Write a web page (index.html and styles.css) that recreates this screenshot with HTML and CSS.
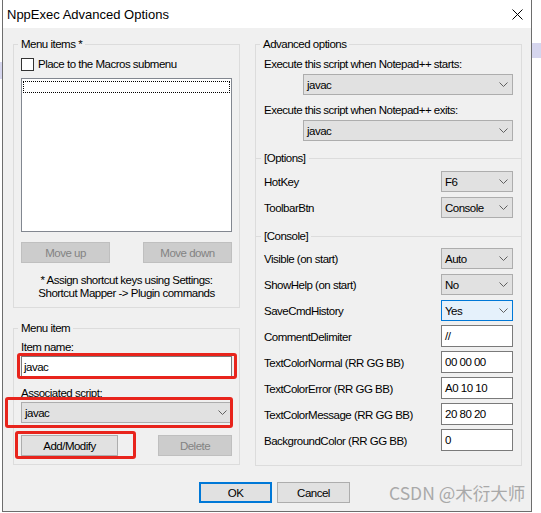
FILE: index.html
```html
<!DOCTYPE html>
<html>
<head>
<meta charset="utf-8">
<title>NppExec Advanced Options</title>
<link rel="stylesheet" href="styles.css">
</head>
<body>
<div class="window">
  <div class="titlebar">
    <span class="title">NppExec Advanced Options</span>
    <svg class="close" width="11" height="11" viewBox="0 0 11 11"><path d="M0.5 0.5 L10.5 10.5 M10.5 0.5 L0.5 10.5" stroke="#000" stroke-width="1" fill="none"/></svg>
  </div>
  <div class="client">
    <div class="columns">
      <div class="leftcol">
        <div class="group g-items">
          <span class="legend">Menu items *</span>
          <div class="check"><span class="box"></span><span>Place to the Macros submenu</span></div>
          <div class="listbox"><div class="focusrow"></div></div>
          <div class="btnrow">
            <div class="btn disabled w-move">Move up</div>
            <div class="btn disabled w-move">Move down</div>
          </div>
          <p class="note">* Assign shortcut keys using Settings:<br>Shortcut Mapper -&gt; Plugin commands</p>
        </div>
        <div class="group g-item">
          <span class="legend">Menu item</span>
          <div class="label">Item name:</div>
          <div class="edit edit-name">javac</div>
          <div class="label label-gap">Associated script:</div>
          <div class="combo combo-assoc"><span>javac</span><svg width="9" height="5" viewBox="0 0 9 5"><polyline points="0.5,0.5 4.5,4.5 8.5,0.5" fill="none" stroke="#606060" stroke-width="1"/></svg></div>
          <div class="btnrow btnrow-item">
            <div class="btn w-add">Add/Modify</div>
            <div class="btn disabled w-del">Delete</div>
          </div>
        </div>
      </div>
      <div class="group g-adv">
        <span class="legend">Advanced options</span>
        <div class="label">Execute this script when Notepad++ starts:</div>
        <div class="combo combo-wide"><span>javac</span><svg width="9" height="5" viewBox="0 0 9 5"><polyline points="0.5,0.5 4.5,4.5 8.5,0.5" fill="none" stroke="#606060" stroke-width="1"/></svg></div>
        <div class="label label-second">Execute this script when Notepad++ exits:</div>
        <div class="combo combo-wide"><span>javac</span><svg width="9" height="5" viewBox="0 0 9 5"><polyline points="0.5,0.5 4.5,4.5 8.5,0.5" fill="none" stroke="#606060" stroke-width="1"/></svg></div>

        <div class="section sec-options"><span>[Options]</span></div>
        <div class="opts opts-options">
          <span>HotKey</span>
          <div class="combo"><span>F6</span><svg width="9" height="5" viewBox="0 0 9 5"><polyline points="0.5,0.5 4.5,4.5 8.5,0.5" fill="none" stroke="#606060" stroke-width="1"/></svg></div>
          <span>ToolbarBtn</span>
          <div class="combo"><span>Console</span><svg width="9" height="5" viewBox="0 0 9 5"><polyline points="0.5,0.5 4.5,4.5 8.5,0.5" fill="none" stroke="#606060" stroke-width="1"/></svg></div>
        </div>

        <div class="section sec-console"><span>[Console]</span></div>
        <div class="opts opts-console">
          <span>Visible (on start)</span>
          <div class="combo"><span>Auto</span><svg width="9" height="5" viewBox="0 0 9 5"><polyline points="0.5,0.5 4.5,4.5 8.5,0.5" fill="none" stroke="#606060" stroke-width="1"/></svg></div>
          <span>ShowHelp (on start)</span>
          <div class="combo"><span>No</span><svg width="9" height="5" viewBox="0 0 9 5"><polyline points="0.5,0.5 4.5,4.5 8.5,0.5" fill="none" stroke="#606060" stroke-width="1"/></svg></div>
          <span>SaveCmdHistory</span>
          <div class="combo focused"><span>Yes</span><svg width="9" height="5" viewBox="0 0 9 5"><polyline points="0.5,0.5 4.5,4.5 8.5,0.5" fill="none" stroke="#606060" stroke-width="1"/></svg></div>
          <span>CommentDelimiter</span>
          <div class="edit edit-small">//</div>
          <span>TextColorNormal (RR GG BB)</span>
          <div class="edit edit-small">00 00 00</div>
          <span>TextColorError (RR GG BB)</span>
          <div class="edit edit-small">A0 10 10</div>
          <span>TextColorMessage (RR GG BB)</span>
          <div class="edit edit-small">20 80 20</div>
          <span>BackgroundColor (RR GG BB)</span>
          <div class="edit edit-small">0</div>
        </div>
      </div>
    </div>
    <div class="footer">
      <div class="btn btn-ok">OK</div>
      <div class="btn btn-cancel">Cancel</div>
    </div>
  </div>
</div>
<div class="mark mark-name"></div>
<div class="mark mark-assoc"></div>
<div class="mark mark-add"></div>
<span class="watermark">CSDN @木衍大师</span>
</body>
</html>
```
FILE: styles.css
```css
html, body {
  margin: 0;
  padding: 0;
}
body {
  width: 541px;
  height: 513px;
  position: relative;
  overflow: hidden;
  font-family: "Liberation Sans", Arial, sans-serif;
  font-size: 11.5px;
  letter-spacing: -0.5px;
  color: #000;
  background:
    linear-gradient(#d6d6ee, #d6d6ee) right 0 top 43px / 10px 15px no-repeat,
    linear-gradient(#d6d6ee, #d6d6ee) left 0 top 62px / 2px 17px no-repeat,
    #ffffff;
}
.window {
  margin-left: 2px;
  width: 530px;
  height: 512px;
  box-sizing: border-box;
  border: 1px solid #6d6d6d;
  border-top: none;
  background: #f0f0f0;
  display: flex;
  flex-direction: column;
}
.titlebar {
  height: 28px;
  flex: 0 0 28px;
  background: #ffffff;
  display: flex;
  align-items: center;
  padding-left: 4px;
  padding-right: 8px;
}
.title {
  font-size: 13px;
  letter-spacing: 0;
  line-height: 16px;
  margin-top: 1px;
}
.close {
  margin-left: auto;
}
.client {
  flex: 1;
  padding: 16px 9px 0 10px;
}
.columns {
  display: flex;
  gap: 15px;
  align-items: flex-start;
}
.leftcol {
  width: 227px;
  display: flex;
  flex-direction: column;
}
.group {
  position: relative;
  border: 1px solid #dcdcdc;
  box-sizing: border-box;
}
.legend {
  position: absolute;
  top: -8px;
  left: 4px;
  padding: 0 3px;
  background: #f0f0f0;
  line-height: 14px;
}
.g-items {
  height: 264px;
  padding: 13px 7px 0 7px;
}
.check {
  display: flex;
  align-items: center;
  gap: 4px;
  height: 13px;
  line-height: 13px;
}
.box {
  width: 13px;
  height: 13px;
  box-sizing: border-box;
  border: 1px solid #333333;
  background: #ffffff;
}
.listbox {
  margin-top: 7px;
  height: 154px;
  box-sizing: border-box;
  border: 1px solid #828790;
  background: #ffffff;
}
.focusrow {
  margin: 2px 1px 0 1px;
  height: 12px;
  box-sizing: border-box;
  border: 1px dotted #000000;
}
.btnrow {
  display: flex;
  justify-content: space-between;
  margin-top: 10px;
}
.btn {
  height: 21px;
  box-sizing: border-box;
  border: 1px solid #adadad;
  background: #e1e1e1;
  display: flex;
  align-items: center;
  justify-content: center;
  line-height: 14px;
}
.btn.disabled {
  background: #cccccc;
  border-color: #bfbfbf;
  color: #838383;
}
.w-move { width: 89px; }
.w-add { width: 97px; }
.w-del { width: 74px; }
.note {
  margin: 11px 0 0 0;
  line-height: 13px;
  text-align: center;
}
.g-item {
  margin-top: 20px;
  height: 137px;
  padding: 11px 7px 0 7px;
}
.label {
  height: 14px;
  line-height: 14px;
  white-space: nowrap;
}
.label-gap { margin-top: 9px; }
.edit {
  box-sizing: border-box;
  border: 1px solid #7a7a7a;
  background: #ffffff;
  padding-left: 2px;
  display: flex;
  align-items: center;
}
.edit-name {
  margin-top: 2px;
  height: 21px;
}
.combo {
  height: 21px;
  box-sizing: border-box;
  border: 1px solid #adadad;
  background: #e1e1e1;
  display: flex;
  align-items: center;
  justify-content: space-between;
  padding: 0 4px 0 3px;
}
.combo.focused {
  border-color: #0078d7;
  background: #e5f1fb;
}
.combo-assoc { margin-top: 2px; }
.btnrow-item { margin-top: 12px; }
.g-adv {
  width: 267px;
  height: 422px;
  padding: 12px 8px 0 8px;
}
.combo-wide {
  margin: 3px 0 0 39px;
}
.label-second { margin-top: 8px; }
.section {
  display: flex;
  align-items: center;
  height: 14px;
  line-height: 14px;
  margin: 0 -9px;
}
.section::before {
  content: "";
  width: 6px;
  height: 1px;
  background: #dcdcdc;
}
.section::after {
  content: "";
  flex: 1;
  height: 1px;
  background: #dcdcdc;
}
.section span {
  padding: 0 3px;
}
.sec-options { margin-top: 10px; }
.sec-console { margin-top: 11px; }
.opts {
  display: grid;
  grid-template-columns: 1fr 72px;
  grid-auto-rows: 21px;
  row-gap: 5px;
  align-items: center;
}
.opts-options { margin-top: 6px; }
.opts-console { margin-top: 5px; }
.edit-small {
  align-self: start;
  margin-top: -1px;
  height: 22px;
  padding-left: 3px;
}
.footer {
  display: flex;
  gap: 5px;
  margin-top: 16px;
  padding-left: 186px;
}
.btn-ok {
  width: 73px;
  border: 2px solid #0078d7;
}
.btn-cancel {
  width: 73px;
}
.mark {
  position: absolute;
  box-sizing: border-box;
  border: 3px solid #e8241c;
  border-radius: 3px;
}
.mark-name { left: 17px; top: 353px; width: 220px; height: 26px; }
.mark-assoc { left: 5px; top: 397px; width: 228px; height: 31px; }
.mark-add { left: 15px; top: 431px; width: 121px; height: 28px; }
.watermark {
  position: absolute;
  left: 389px;
  top: 483px;
  font-family: "Noto Sans CJK SC", "Noto Sans", sans-serif;
  font-size: 17.5px;
  letter-spacing: 0;
  line-height: 20px;
  color: #a9a9a9;
  white-space: nowrap;
}
```
